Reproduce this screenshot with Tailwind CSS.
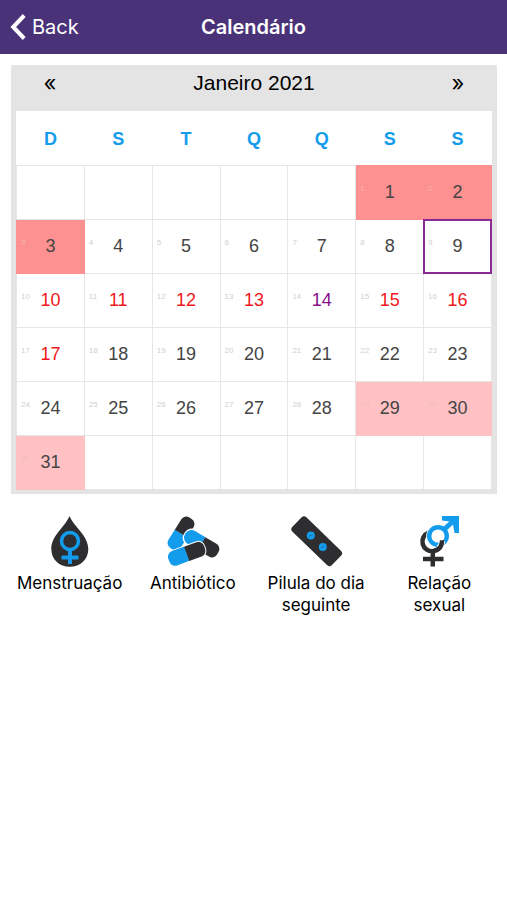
<!DOCTYPE html>
<html lang="pt">
<head>
<meta charset="utf-8">
<meta name="viewport" content="width=device-width, initial-scale=1">
<title>Calendário</title>
<script src="https://cdn.jsdelivr.net/npm/@tailwindcss/browser@4"></script>
</head>
<body class="min-h-screen bg-white font-['Inter',sans-serif] text-black">
<header class="grid h-[54px] grid-cols-[1fr_auto_1fr] items-center bg-[#4a3279] text-white">
  <a href="#" class="flex items-center gap-1.5 pl-2.5 text-[20px]">
    <svg class="h-[26px] w-4" viewBox="0 0 16 26" fill="none" stroke="currentColor" stroke-width="4" aria-hidden="true"><path d="M14.2 1.5 3.2 13l11 11.5"/></svg>
    Back
  </a>
  <h1 class="text-[20px] font-semibold">Calendário</h1>
</header>
<main>
  <section class="mr-2.5 ml-[11px] mt-[11px] bg-[#e4e4e4] px-[5px] pb-1 font-['Liberation_Sans',sans-serif]" aria-label="Janeiro 2021">
    <div class="grid h-[46px] grid-cols-7 items-start pt-1">
      <button type="button" aria-label="Mês anterior" class="font-['Inter',sans-serif] text-[22px] leading-7">«</button>
      <h2 class="col-span-5 text-center text-[21px] leading-7">Janeiro 2021</h2>
      <button type="button" aria-label="Próximo mês" class="font-['Inter',sans-serif] text-[22px] leading-7">»</button>
    </div>
    <table class="w-full table-fixed border-collapse bg-white text-[18px] text-[#444]">
      <thead>
        <tr class="h-[54px] text-[#149cec] *:pt-1">
          <th scope="col">D</th><th scope="col">S</th><th scope="col">T</th><th scope="col">Q</th><th scope="col">Q</th><th scope="col">S</th><th scope="col">S</th>
        </tr>
      </thead>
      <tbody id="days"></tbody>
    </table>
  </section>
  <nav class="mt-4 grid grid-cols-4 pr-1.5 pl-2 text-center text-[17px] leading-[22px]" aria-label="Registros">
    <button type="button" class="flex flex-col items-center justify-start gap-0.5">
      <svg class="size-[60px]" viewBox="-1 0 60 60" aria-hidden="true">
        <path fill="#2e2e30" d="M28.5 6C24 17 10.300 25.500 10.300 39c0 10.500 8 17.800 18.500 17.800S47.300 49.500 47.300 39C47.300 25.500 33 17 28.500 6Z"/>
        <g fill="none" stroke="#149cec"><circle cx="29" cy="31" r="8.500" stroke-width="3.500"/><path stroke-width="4" d="M29 39.500V54M20.500 47.500h17"/></g>
      </svg>
      Menstruação
    </button>
    <button type="button" class="flex flex-col items-center justify-start gap-0.5">
      <svg class="size-[60px]" viewBox="2 0 60 60" aria-hidden="true">
        <g transform="translate(20 23.500) rotate(-58)"><path fill="#149cec" d="M.2-7.300H-12a6 6 0 0 0-6 6v2.600a6 6 0 0 0 6 6H.2Z"/><path fill="#2e2e30" d="M0-7.300h12a6 6 0 0 1 6 6v2.600a6 6 0 0 1-6 6H0Z"/></g>
        <g transform="translate(40.500 33.500) rotate(31)"><rect x="-20" y="-9" width="40" height="18" rx="8" fill="#fff"/><path fill="#149cec" d="M.2-7.400H-12a7 7 0 0 0-7 7v.8a7 7 0 0 0 7 7H.2Z"/><path fill="#2e2e30" d="M0-7.400h13a6 6 0 0 1 6 6v2.800a6 6 0 0 1-6 6H0Z"/></g>
        <g transform="translate(25.700 43.800) rotate(-20)"><rect x="-20" y="-8.600" width="40" height="17.200" rx="7" fill="#fff"/><path fill="#149cec" d="M.2-7.600H-13a6 6 0 0 0-6 6v3.200a6 6 0 0 0 6 6H.2Z"/><path fill="#2e2e30" d="M0-7.600h13a6 6 0 0 1 6 6v3.200a6 6 0 0 1-6 6H0Z"/></g>
      </svg>
      Antibiótico
    </button>
    <button type="button" class="flex flex-col items-center justify-start gap-0.5">
      <svg class="size-[60px]" viewBox="0 0 60 60" aria-hidden="true">
        <g transform="translate(30.700 31.200) rotate(44)"><rect x="-27.500" y="-10" width="55" height="20" rx="3.500" fill="#2e2e30"/></g>
        <circle cx="24.800" cy="25.500" r="4" fill="#149cec"/><circle cx="36.800" cy="37" r="4" fill="#149cec"/>
        <path stroke="#1777b4" stroke-width="1" d="m22.800 26.300 4-1.500M34.800 37.800l4-1.500"/>
      </svg>
      <span>Pilula do dia<br>seguinte</span>
    </button>
    <button type="button" class="flex flex-col items-center justify-start gap-0.5">
      <svg class="size-[60px]" viewBox="-2 0 60 60" fill="none" aria-hidden="true">
        <path stroke="#2e2e30" stroke-width="4.500" d="M17.500 22.500a9.700 9.700 0 1 0 13.300 8.700M21.800 41v15.500M12 49h20.500"/>
        <circle cx="27" cy="26" r="8.800" stroke="#fff" stroke-width="6"/>
        <circle cx="27" cy="26" r="8.800" stroke="#149cec" stroke-width="4.400"/>
        <path stroke="#fff" stroke-width="6" d="M27.500 38c2.200-1.700 3.500-4.200 3.600-7"/>
        <path stroke="#2e2e30" stroke-width="4.500" d="M23.500 40.800c4.600-1.200 7.600-5 7.600-10.600"/>
        <path stroke="#149cec" stroke-width="5" d="M33 19.500 43.500 10"/>
        <path fill="#149cec" d="M31 6h17v17h-4.500l-1.500-8.500-3-3-8-1Z"/>
      </svg>
      <span>Relação<br>sexual</span>
    </button>
  </nav>
</main>
<script>
  // January 2021 starts on a Friday, the sixth column.
  const offset = 5, total = 31;
  const backgrounds = {1: 'bg-[#fd9090]', 2: 'bg-[#fd9090]', 3: 'bg-[#fd9090]', 29: 'bg-[#ffc1c3]', 30: 'bg-[#ffc1c3]', 31: 'bg-[#ffc1c3]'};
  const isFertile = d => d >= 10 && d <= 17;
  let html = '';
  for (let week = 0; week < 6; week++) {
    html += '<tr class="h-[54px]">';
    for (let col = 0; col < 7; col++) {
      const d = week * 7 + col - offset + 1;
      if (d < 1 || d > total) {
        html += '<td class="border border-[#e6e6e6] p-0"></td>';
        continue;
      }
      const bg = backgrounds[d] || '';
      const edge = bg ? (d < 4 ? 'border-[#fd9090]' : 'border-[#ffc1c3]') : 'border-[#e6e6e6]';
      const color = d === 14 ? 'text-[#86108c]' : isFertile(d) ? 'text-[#f01820]' : '';
      const ring = d === 9 ? 'outline-2 -outline-offset-1 outline-[#8b2a93]' : '';
      const small = d > 28 ? 'text-[#f3bcbd]' : d < 4 ? 'text-[#f5b5b3]' : 'text-[#cfcfcf]';
      html += `<td class="border p-0 ${bg} ${edge}"><button type="button" class="relative block h-[53px] w-full pt-px ${color} ${ring}"><span class="absolute left-1 top-[17px] text-[8px] leading-3 ${small}" aria-hidden="true">${d}</span>${d}</button></td>`;
    }
    html += '</tr>';
  }
  document.getElementById('days').innerHTML = html;
</script>
</body>
</html>
